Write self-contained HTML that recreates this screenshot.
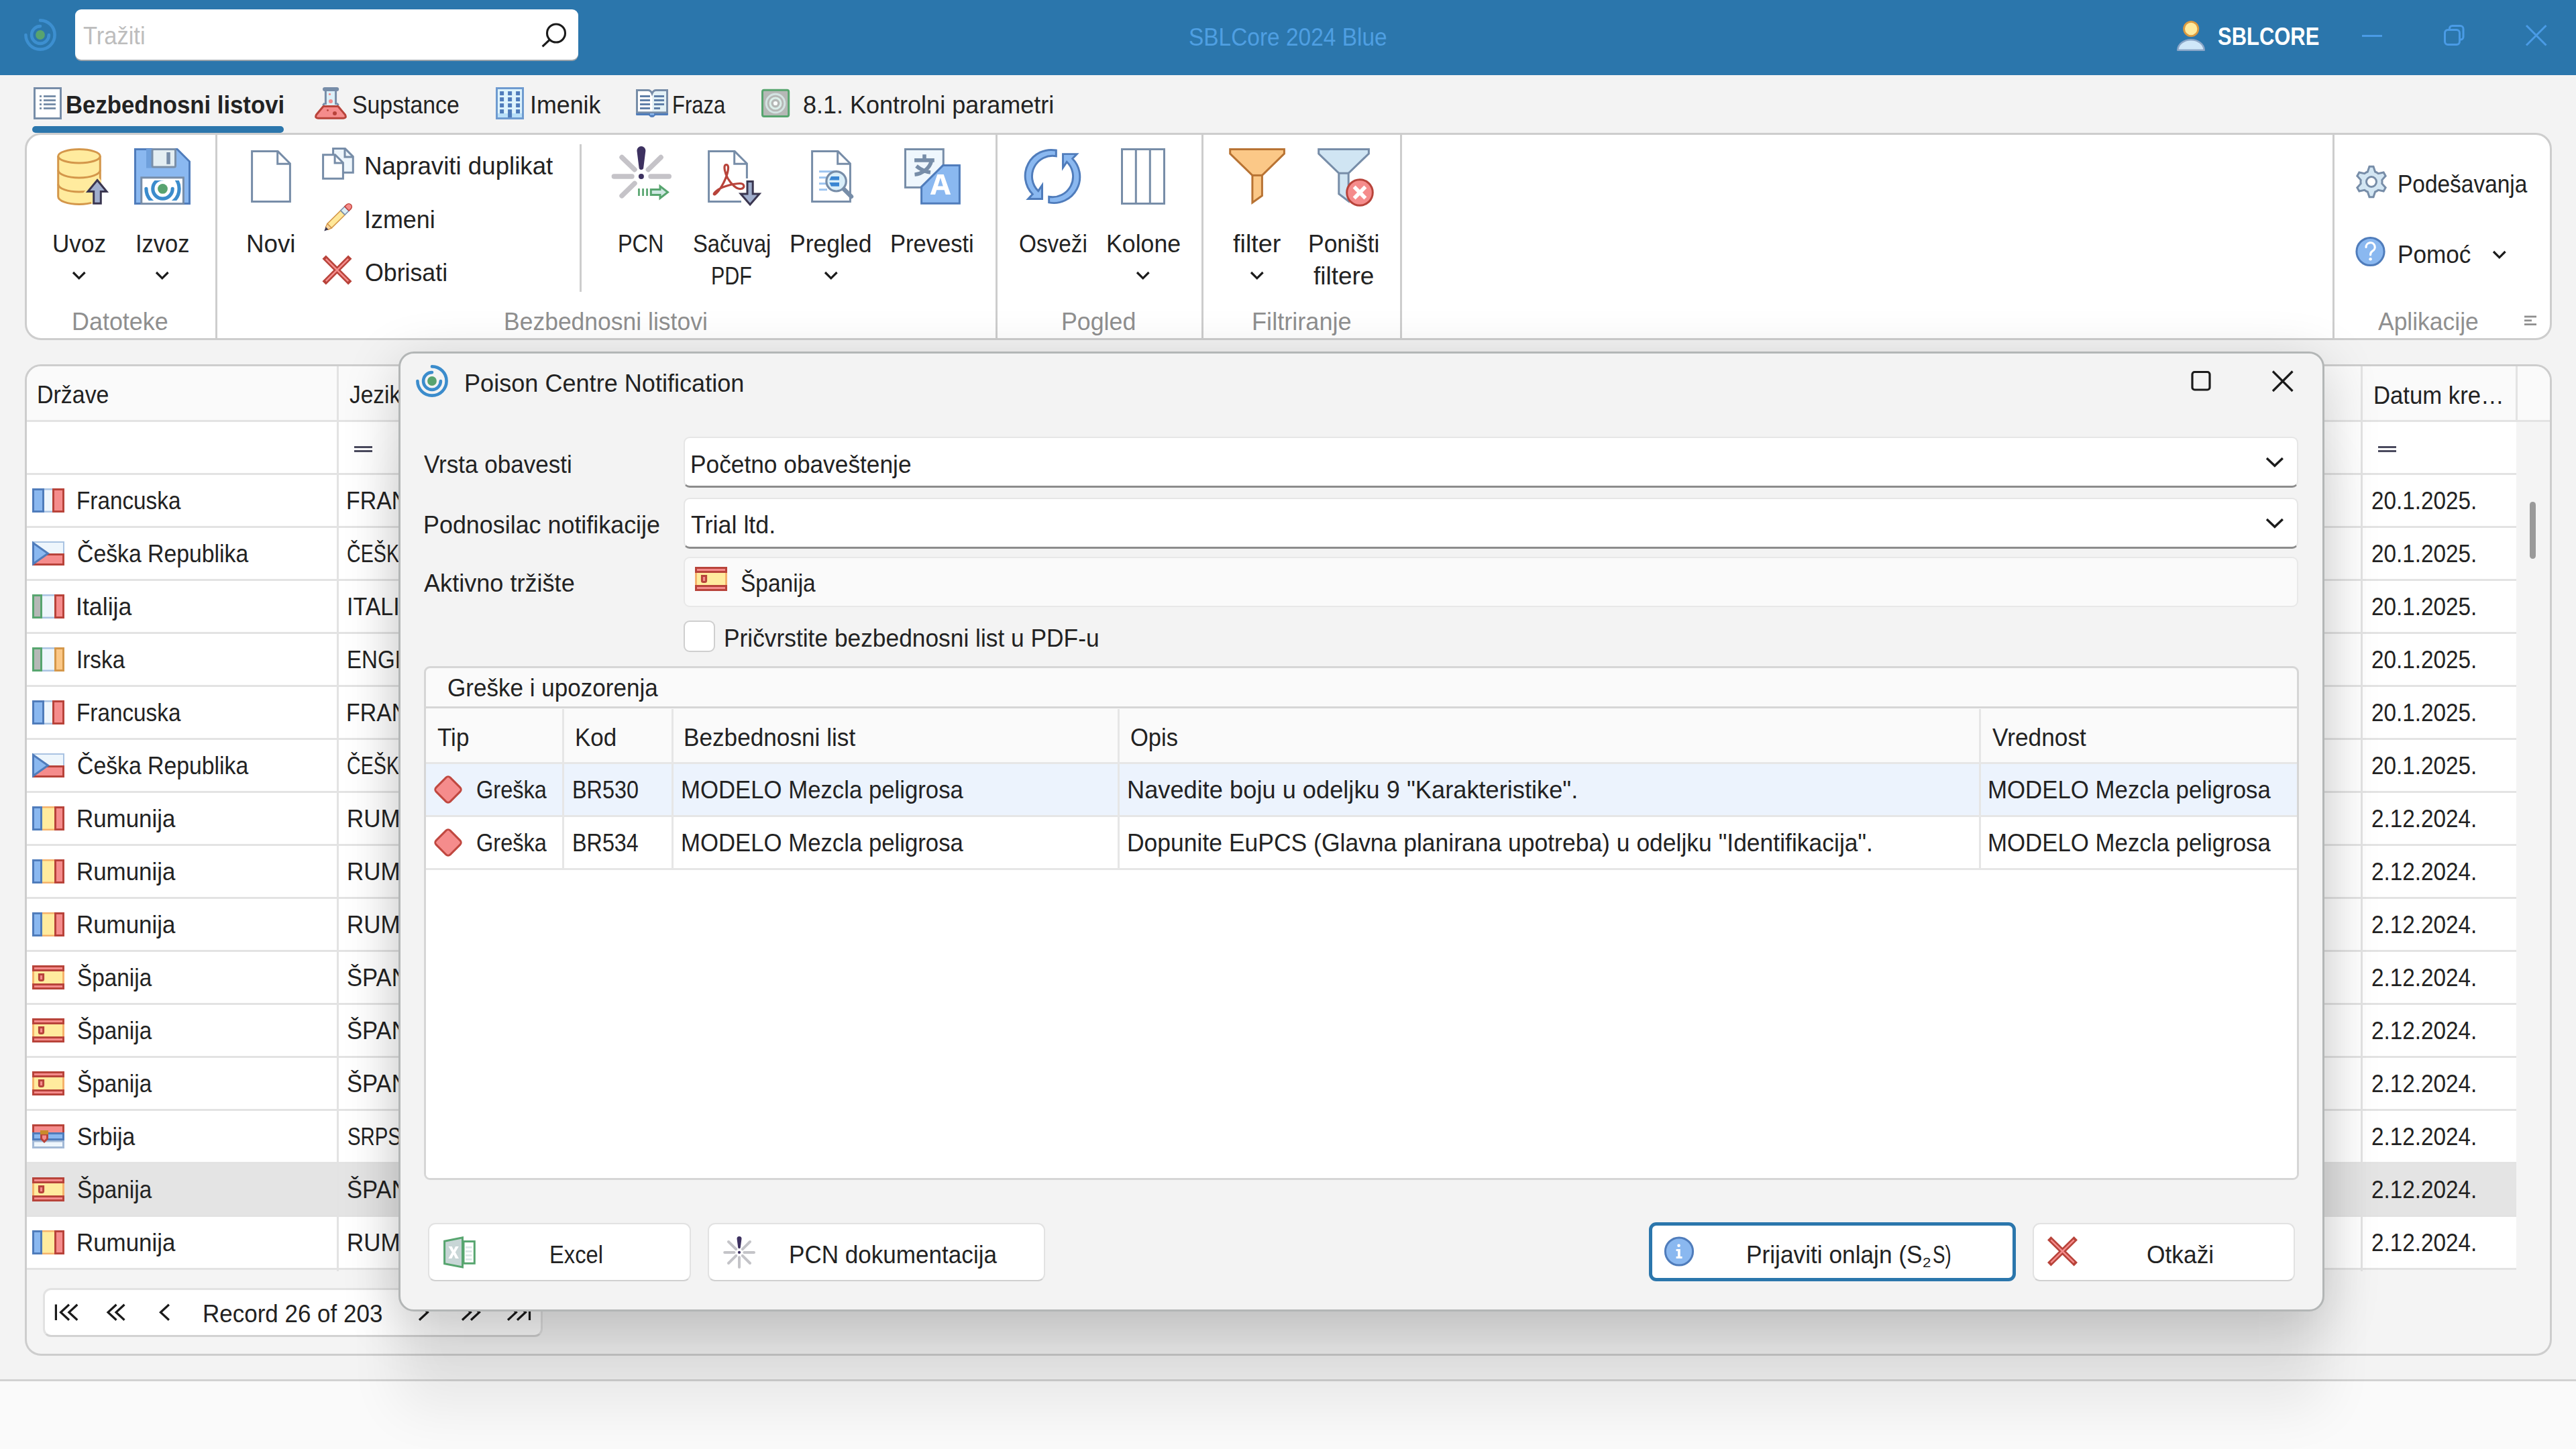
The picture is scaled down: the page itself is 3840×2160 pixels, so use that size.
<!DOCTYPE html>
<html lang="sr"><head><meta charset="utf-8"><title>SBLCore</title>
<style>
html,body{margin:0;padding:0;}
body{width:3840px;height:2160px;overflow:hidden;background:#f3f3f3;position:relative;font-family:"Liberation Sans",sans-serif;}
.t{position:absolute;white-space:nowrap;line-height:1;transform-origin:0 0;}
div{box-sizing:border-box;}
svg{overflow:visible;}
</style></head><body>
<div style="position:absolute;left:0px;top:0px;width:3840px;height:112px;background:#2b76ac;"></div>
<div style="position:absolute;left:112px;top:14px;width:750px;height:75px;background:#fff;border-radius:9px;box-shadow:0 2px 0 #9aa3aa;"></div>
<span class="t" style="left:124.31px;top:36.23px;font-size:36.2px;color:#bdbdbd;transform:scaleX(0.9530);">Tražiti</span>
<span class="t" style="left:1771.99px;top:38.23px;font-size:36.2px;color:#4f9fe2;transform:scaleX(0.9241);">SBLCore 2024 Blue</span>
<span class="t" style="left:3306.07px;top:37.23px;font-size:36.2px;font-weight:bold;color:#ffffff;transform:scaleX(0.8551);">SBLCORE</span>
<span class="t" style="left:97.74px;top:139.23px;font-size:36.2px;font-weight:bold;color:#222222;transform:scaleX(0.9597);">Bezbednosni listovi</span>
<div style="position:absolute;left:47.5px;top:188px;width:375px;height:9.5px;background:#2b76ac;border-radius:5px;"></div>
<span class="t" style="left:524.98px;top:139.23px;font-size:36.2px;color:#222222;transform:scaleX(0.9339);">Supstance</span>
<span class="t" style="left:789.78px;top:139.23px;font-size:36.2px;color:#222222;transform:scaleX(0.9889);">Imenik</span>
<span class="t" style="left:1001.52px;top:139.23px;font-size:36.2px;color:#222222;transform:scaleX(0.8561);">Fraza</span>
<span class="t" style="left:1197.38px;top:139.23px;font-size:36.2px;color:#222222;transform:scaleX(0.9948);">8.1. Kontrolni parametri</span>
<div style="position:absolute;left:37px;top:197.5px;width:3767px;height:309.5px;background:#fff;border:3px solid #cdcdcd;border-radius:24px;"></div>
<div style="position:absolute;left:321.0px;top:200px;width:3px;height:305px;background:#cdcdcd;"></div>
<div style="position:absolute;left:1483.5px;top:200px;width:3px;height:305px;background:#cdcdcd;"></div>
<div style="position:absolute;left:1790.5px;top:200px;width:3px;height:305px;background:#cdcdcd;"></div>
<div style="position:absolute;left:2086.5px;top:200px;width:3px;height:305px;background:#cdcdcd;"></div>
<div style="position:absolute;left:3476.5px;top:200px;width:3px;height:305px;background:#cdcdcd;"></div>
<div style="position:absolute;left:863.5px;top:214.5px;width:3px;height:220px;background:#cdcdcd;"></div>
<span class="t" style="left:77.87px;top:346.23px;font-size:36.2px;color:#222222;transform:scaleX(0.9704);">Uvoz</span>
<span class="t" style="left:202.40px;top:346.23px;font-size:36.2px;color:#222222;transform:scaleX(0.9527);">Izvoz</span>
<span class="t" style="left:367.06px;top:346.23px;font-size:36.2px;color:#222222;transform:scaleX(1.0156);">Novi</span>
<span class="t" style="left:543.07px;top:230.23px;font-size:36.2px;color:#222222;transform:scaleX(1.0132);">Napraviti duplikat</span>
<span class="t" style="left:542.77px;top:310.23px;font-size:36.2px;color:#222222;transform:scaleX(0.9921);">Izmeni</span>
<span class="t" style="left:543.89px;top:389.23px;font-size:36.2px;color:#222222;transform:scaleX(0.9874);">Obrisati</span>
<span class="t" style="left:921.41px;top:346.23px;font-size:36.2px;color:#222222;transform:scaleX(0.8953);">PCN</span>
<span class="t" style="left:1033.03px;top:346.23px;font-size:36.2px;color:#222222;transform:scaleX(0.9037);">Sačuvaj</span>
<span class="t" style="left:1059.57px;top:393.73px;font-size:36.2px;color:#222222;transform:scaleX(0.8405);">PDF</span>
<span class="t" style="left:1177.16px;top:346.23px;font-size:36.2px;color:#222222;transform:scaleX(0.9811);">Pregled</span>
<span class="t" style="left:1327.24px;top:346.23px;font-size:36.2px;color:#222222;transform:scaleX(0.9543);">Prevesti</span>
<span class="t" style="left:1518.50px;top:346.23px;font-size:36.2px;color:#222222;transform:scaleX(0.9211);">Osveži</span>
<span class="t" style="left:1648.65px;top:346.23px;font-size:36.2px;color:#222222;transform:scaleX(0.9858);">Kolone</span>
<span class="t" style="left:1838.43px;top:346.23px;font-size:36.2px;color:#222222;transform:scaleX(1.0454);">filter</span>
<span class="t" style="left:1949.66px;top:346.23px;font-size:36.2px;color:#222222;transform:scaleX(0.9792);">Poništi</span>
<span class="t" style="left:1958.45px;top:393.73px;font-size:36.2px;color:#222222;transform:scaleX(1.0216);">filtere</span>
<span class="t" style="left:3574.32px;top:257.23px;font-size:36.2px;color:#222222;transform:scaleX(0.9242);">Podešavanja</span>
<span class="t" style="left:3574.19px;top:362.23px;font-size:36.2px;color:#222222;transform:scaleX(0.9717);">Pomoć</span>
<span class="t" style="left:107.13px;top:461.73px;font-size:36.2px;color:#8f8f8f;transform:scaleX(0.9923);">Datoteke</span>
<span class="t" style="left:751.16px;top:461.73px;font-size:36.2px;color:#8f8f8f;transform:scaleX(0.9806);">Bezbednosni listovi</span>
<span class="t" style="left:1582.14px;top:461.73px;font-size:36.2px;color:#8f8f8f;transform:scaleX(0.9878);">Pogled</span>
<span class="t" style="left:1866.11px;top:461.73px;font-size:36.2px;color:#8f8f8f;transform:scaleX(0.9996);">Filtriranje</span>
<span class="t" style="left:3545.00px;top:461.73px;font-size:36.2px;color:#8f8f8f;transform:scaleX(0.9794);">Aplikacije</span>
<svg style="position:absolute;left:106.2px;top:403.20000000000005px;" width="23.6" height="14.8" viewBox="0 0 23.6 14.8"><polyline points="3,3 11.8,11.8 20.6,3" fill="none" stroke="#1b1b1b" stroke-width="3.2" stroke-linecap="butt" stroke-linejoin="miter"/></svg>
<svg style="position:absolute;left:230.2px;top:403.20000000000005px;" width="23.6" height="14.8" viewBox="0 0 23.6 14.8"><polyline points="3,3 11.8,11.8 20.6,3" fill="none" stroke="#1b1b1b" stroke-width="3.2" stroke-linecap="butt" stroke-linejoin="miter"/></svg>
<svg style="position:absolute;left:1227.2px;top:403.20000000000005px;" width="23.6" height="14.8" viewBox="0 0 23.6 14.8"><polyline points="3,3 11.8,11.8 20.6,3" fill="none" stroke="#1b1b1b" stroke-width="3.2" stroke-linecap="butt" stroke-linejoin="miter"/></svg>
<svg style="position:absolute;left:1692.2px;top:403.20000000000005px;" width="23.6" height="14.8" viewBox="0 0 23.6 14.8"><polyline points="3,3 11.8,11.8 20.6,3" fill="none" stroke="#1b1b1b" stroke-width="3.2" stroke-linecap="butt" stroke-linejoin="miter"/></svg>
<svg style="position:absolute;left:1862.2px;top:403.20000000000005px;" width="23.6" height="14.8" viewBox="0 0 23.6 14.8"><polyline points="3,3 11.8,11.8 20.6,3" fill="none" stroke="#1b1b1b" stroke-width="3.2" stroke-linecap="butt" stroke-linejoin="miter"/></svg>
<svg style="position:absolute;left:3713.5px;top:372.40000000000003px;" width="23.6" height="14.8" viewBox="0 0 23.6 14.8"><polyline points="3,3 11.8,11.8 20.6,3" fill="none" stroke="#1b1b1b" stroke-width="3.2" stroke-linecap="butt" stroke-linejoin="miter"/></svg>
<div style="position:absolute;left:37px;top:543px;width:3767px;height:1477.5px;background:#f4f4f4;border:3px solid #cdcdcd;border-radius:24px;overflow:hidden;">
<div style="position:absolute;left:0px;top:0px;width:3762px;height:80px;background:#fafafa;"></div>
<div style="position:absolute;left:0px;top:80px;width:3711px;height:1266px;background:#fff;"></div>
<div style="position:absolute;left:0px;top:1187px;width:3711px;height:80px;background:#e4e4e4;"></div>
<div style="position:absolute;left:0px;top:79.5px;width:3762px;height:3px;background:#e3e3e3;"></div>
<div style="position:absolute;left:0px;top:158.5px;width:3711px;height:3px;background:#e3e3e3;"></div>
<div style="position:absolute;left:0px;top:237.5px;width:3711px;height:3px;background:#e3e3e3;"></div>
<div style="position:absolute;left:0px;top:316.5px;width:3711px;height:3px;background:#e3e3e3;"></div>
<div style="position:absolute;left:0px;top:395.5px;width:3711px;height:3px;background:#e3e3e3;"></div>
<div style="position:absolute;left:0px;top:474.5px;width:3711px;height:3px;background:#e3e3e3;"></div>
<div style="position:absolute;left:0px;top:553.5px;width:3711px;height:3px;background:#e3e3e3;"></div>
<div style="position:absolute;left:0px;top:632.5px;width:3711px;height:3px;background:#e3e3e3;"></div>
<div style="position:absolute;left:0px;top:711.5px;width:3711px;height:3px;background:#e3e3e3;"></div>
<div style="position:absolute;left:0px;top:790.5px;width:3711px;height:3px;background:#e3e3e3;"></div>
<div style="position:absolute;left:0px;top:869.5px;width:3711px;height:3px;background:#e3e3e3;"></div>
<div style="position:absolute;left:0px;top:948.5px;width:3711px;height:3px;background:#e3e3e3;"></div>
<div style="position:absolute;left:0px;top:1027.5px;width:3711px;height:3px;background:#e3e3e3;"></div>
<div style="position:absolute;left:0px;top:1106.5px;width:3711px;height:3px;background:#e3e3e3;"></div>
<div style="position:absolute;left:0px;top:1185.5px;width:3711px;height:3px;background:#e3e3e3;"></div>
<div style="position:absolute;left:0px;top:1264.5px;width:3711px;height:3px;background:#e3e3e3;"></div>
<div style="position:absolute;left:0px;top:1343.5px;width:3711px;height:3px;background:#e3e3e3;"></div>
<div style="position:absolute;left:461.5px;top:0px;width:3px;height:1349px;background:#e3e3e3;"></div>
<div style="position:absolute;left:3478.5px;top:0px;width:3px;height:1349px;background:#e3e3e3;"></div>
<div style="position:absolute;left:3709.5px;top:0px;width:3px;height:81px;background:#e3e3e3;"></div>
</div>
<span class="t" style="left:55.28px;top:571.23px;font-size:36.2px;color:#222222;transform:scaleX(0.9378);">Države</span>
<span class="t" style="left:520.50px;top:571.23px;font-size:36.2px;color:#222222;transform:scaleX(0.9250);">Jezik</span>
<span class="t" style="left:3538.22px;top:571.73px;font-size:36.2px;color:#222222;transform:scaleX(0.9585);">Datum kre…</span>
<div style="position:absolute;left:528px;top:664.5px;width:27px;height:3px;background:#4a4a5e;"></div>
<div style="position:absolute;left:528px;top:670.5px;width:27px;height:3px;background:#4a4a5e;"></div>
<div style="position:absolute;left:3545px;top:664.5px;width:27px;height:3px;background:#4a4a5e;"></div>
<div style="position:absolute;left:3545px;top:670.5px;width:27px;height:3px;background:#4a4a5e;"></div>
<span class="t" style="left:113.84px;top:729.23px;font-size:36.2px;color:#222222;transform:scaleX(0.9200);">Francuska</span>
<span class="t" style="left:516.29px;top:729.23px;font-size:36.2px;color:#222222;transform:scaleX(0.9356);">FRAN</span>
<span class="t" style="left:3534.83px;top:729.23px;font-size:36.2px;color:#222222;transform:scaleX(0.9200);">20.1.2025.</span>
<span class="t" style="left:114.81px;top:808.23px;font-size:36.2px;color:#222222;transform:scaleX(0.9332);">Češka Republika</span>
<span class="t" style="left:517.07px;top:808.23px;font-size:36.2px;color:#222222;transform:scaleX(0.7913);">ČEŠK</span>
<span class="t" style="left:3534.83px;top:808.23px;font-size:36.2px;color:#222222;transform:scaleX(0.9200);">20.1.2025.</span>
<span class="t" style="left:113.28px;top:887.23px;font-size:36.2px;color:#222222;transform:scaleX(0.9868);">Italija</span>
<span class="t" style="left:516.94px;top:887.23px;font-size:36.2px;color:#222222;transform:scaleX(0.9381);">ITALI</span>
<span class="t" style="left:3534.83px;top:887.23px;font-size:36.2px;color:#222222;transform:scaleX(0.9200);">20.1.2025.</span>
<span class="t" style="left:113.50px;top:966.23px;font-size:36.2px;color:#222222;transform:scaleX(0.9213);">Irska</span>
<span class="t" style="left:517.05px;top:966.23px;font-size:36.2px;color:#222222;transform:scaleX(0.9155);">ENGL</span>
<span class="t" style="left:3534.83px;top:966.23px;font-size:36.2px;color:#222222;transform:scaleX(0.9200);">20.1.2025.</span>
<span class="t" style="left:113.84px;top:1045.23px;font-size:36.2px;color:#222222;transform:scaleX(0.9200);">Francuska</span>
<span class="t" style="left:516.29px;top:1045.23px;font-size:36.2px;color:#222222;transform:scaleX(0.9356);">FRAN</span>
<span class="t" style="left:3534.83px;top:1045.23px;font-size:36.2px;color:#222222;transform:scaleX(0.9200);">20.1.2025.</span>
<span class="t" style="left:114.81px;top:1124.23px;font-size:36.2px;color:#222222;transform:scaleX(0.9332);">Češka Republika</span>
<span class="t" style="left:517.07px;top:1124.23px;font-size:36.2px;color:#222222;transform:scaleX(0.7913);">ČEŠK</span>
<span class="t" style="left:3534.83px;top:1124.23px;font-size:36.2px;color:#222222;transform:scaleX(0.9200);">20.1.2025.</span>
<span class="t" style="left:113.71px;top:1203.23px;font-size:36.2px;color:#222222;transform:scaleX(0.9644);">Rumunija</span>
<span class="t" style="left:516.91px;top:1203.23px;font-size:36.2px;color:#222222;transform:scaleX(0.9639);">RUM</span>
<span class="t" style="left:3534.83px;top:1203.23px;font-size:36.2px;color:#222222;transform:scaleX(0.9200);">2.12.2024.</span>
<span class="t" style="left:113.71px;top:1282.23px;font-size:36.2px;color:#222222;transform:scaleX(0.9644);">Rumunija</span>
<span class="t" style="left:516.91px;top:1282.23px;font-size:36.2px;color:#222222;transform:scaleX(0.9639);">RUM</span>
<span class="t" style="left:3534.83px;top:1282.23px;font-size:36.2px;color:#222222;transform:scaleX(0.9200);">2.12.2024.</span>
<span class="t" style="left:113.71px;top:1361.23px;font-size:36.2px;color:#222222;transform:scaleX(0.9644);">Rumunija</span>
<span class="t" style="left:516.91px;top:1361.23px;font-size:36.2px;color:#222222;transform:scaleX(0.9639);">RUM</span>
<span class="t" style="left:3534.83px;top:1361.23px;font-size:36.2px;color:#222222;transform:scaleX(0.9200);">2.12.2024.</span>
<span class="t" style="left:115.00px;top:1440.23px;font-size:36.2px;color:#222222;transform:scaleX(0.9211);">Španija</span>
<span class="t" style="left:517.44px;top:1440.23px;font-size:36.2px;color:#222222;transform:scaleX(0.9559);">ŠPAN</span>
<span class="t" style="left:3534.83px;top:1440.23px;font-size:36.2px;color:#222222;transform:scaleX(0.9200);">2.12.2024.</span>
<span class="t" style="left:115.00px;top:1519.23px;font-size:36.2px;color:#222222;transform:scaleX(0.9211);">Španija</span>
<span class="t" style="left:517.44px;top:1519.23px;font-size:36.2px;color:#222222;transform:scaleX(0.9559);">ŠPAN</span>
<span class="t" style="left:3534.83px;top:1519.23px;font-size:36.2px;color:#222222;transform:scaleX(0.9200);">2.12.2024.</span>
<span class="t" style="left:115.00px;top:1598.23px;font-size:36.2px;color:#222222;transform:scaleX(0.9211);">Španija</span>
<span class="t" style="left:517.44px;top:1598.23px;font-size:36.2px;color:#222222;transform:scaleX(0.9559);">ŠPAN</span>
<span class="t" style="left:3534.83px;top:1598.23px;font-size:36.2px;color:#222222;transform:scaleX(0.9200);">2.12.2024.</span>
<span class="t" style="left:114.98px;top:1677.23px;font-size:36.2px;color:#222222;transform:scaleX(0.9322);">Srbija</span>
<span class="t" style="left:517.68px;top:1677.23px;font-size:36.2px;color:#222222;transform:scaleX(0.8109);">SRPS</span>
<span class="t" style="left:3534.83px;top:1677.23px;font-size:36.2px;color:#222222;transform:scaleX(0.9200);">2.12.2024.</span>
<span class="t" style="left:115.00px;top:1756.23px;font-size:36.2px;color:#222222;transform:scaleX(0.9211);">Španija</span>
<span class="t" style="left:517.44px;top:1756.23px;font-size:36.2px;color:#222222;transform:scaleX(0.9559);">ŠPAN</span>
<span class="t" style="left:3534.83px;top:1756.23px;font-size:36.2px;color:#222222;transform:scaleX(0.9200);">2.12.2024.</span>
<span class="t" style="left:113.71px;top:1835.23px;font-size:36.2px;color:#222222;transform:scaleX(0.9644);">Rumunija</span>
<span class="t" style="left:516.91px;top:1835.23px;font-size:36.2px;color:#222222;transform:scaleX(0.9639);">RUM</span>
<span class="t" style="left:3534.83px;top:1835.23px;font-size:36.2px;color:#222222;transform:scaleX(0.9200);">2.12.2024.</span>
<div style="position:absolute;left:3771px;top:748px;width:9px;height:85px;background:#9a9a9a;border-radius:5px;"></div>
<div style="position:absolute;left:63.5px;top:1919.5px;width:745.5px;height:73px;background:#fff;border:3px solid #e2e2e2;border-bottom-color:#d2d2d2;border-radius:12px;"></div>
<span class="t" style="left:302.20px;top:1941.23px;font-size:36.2px;color:#222222;transform:scaleX(0.9667);">Record 26 of 203</span>
<div style="position:absolute;left:0px;top:2059px;width:3840px;height:101px;background:#fafafa;"></div>
<div style="position:absolute;left:0px;top:2056px;width:3840px;height:3px;background:#d2d2d2;"></div>
<svg style="position:absolute;left:0;top:0" width="3840" height="2160" viewBox="0 0 3840 2160"><path d="M60,30.4 A21.6,21.6 0 1 1 38.4,52" fill="none" stroke="#3d8fd0" stroke-width="4.6" stroke-linecap="round"/><path d="M60,39.1 A12.9,12.9 0 1 0 72.9,52" fill="none" stroke="#3d8fd0" stroke-width="4.6" stroke-linecap="round"/><circle cx="60" cy="52" r="6.9" fill="#58a36f"/><circle cx="829" cy="49.5" r="13.5" fill="none" stroke="#1b1b1b" stroke-width="3.1"/><line x1="819.6" y1="59" x2="808.6" y2="69.4" stroke="#1b1b1b" stroke-width="3.1" stroke-linecap="butt"/><circle cx="3266.2" cy="43" r="10.6" fill="#ffeb9e" stroke="#db9a40" stroke-width="2.8"/><path d="M3246.3,74.7 A19.7,15.5 0 0 1 3285.7,74.7 Z" fill="#cfe7f9" stroke="#8aa6c8" stroke-width="2.6" stroke-linejoin="round"/><line x1="3521" y1="53.5" x2="3551" y2="53.5" stroke="#4a9be6" stroke-width="3"/><rect x="3644.5" y="44.5" width="22" height="22" rx="4.5" fill="none" stroke="#4a9be6" stroke-width="3"/><path d="M3651.5,44 V42.5 a4,4 0 0 1 4,-4 h12 a4.5,4.5 0 0 1 4.5,4.5 v12 a4,4 0 0 1 -4,4 h-1.5" fill="none" stroke="#4a9be6" stroke-width="3"/><path d="M3766,38 L3795.5,67.5 M3795.5,38 L3766,67.5" stroke="#4a9be6" stroke-width="3" fill="none"/><rect x="51.5" y="131.5" width="39" height="45" fill="#fff" stroke="#778da8" stroke-width="3"/><rect x="59" y="142.1" width="3" height="2.9" fill="#778da8"/><rect x="65" y="142.1" width="18" height="2.9" fill="#778da8"/><rect x="59" y="148.1" width="3" height="2.9" fill="#778da8"/><rect x="65" y="148.1" width="18" height="2.9" fill="#778da8"/><rect x="59" y="154.1" width="3" height="2.9" fill="#778da8"/><rect x="65" y="154.1" width="18" height="2.9" fill="#778da8"/><rect x="59" y="160.1" width="3" height="2.9" fill="#778da8"/><rect x="65" y="160.1" width="18" height="2.9" fill="#778da8"/><rect x="486.8" y="133" width="12.4" height="24.5" fill="#dcf0f8"/><path d="M485.4,133 V156 M500.6,133 V156" stroke="#778da8" stroke-width="3" fill="none"/><path d="M481.3,157 L484,154 M504.7,157 L502,154" stroke="#778da8" stroke-width="3" fill="none"/><line x1="484" y1="133" x2="502.2" y2="133" stroke="#778da8" stroke-width="6" stroke-linecap="round"/><circle cx="491.5" cy="140.4" r="1.6" fill="#f58c8c"/><circle cx="493" cy="150.9" r="3" fill="#f58c8c"/><path d="M482,158.5 H504 L514.5,171 Q517,176.2 512,176.2 H474 Q469,176.2 471.5,171 Z" fill="#f58c8c" stroke="#b8433a" stroke-width="3" stroke-linejoin="round"/><circle cx="488.5" cy="164.4" r="1.4" fill="#b8433a"/><circle cx="499" cy="169" r="3" fill="#b8433a"/><rect x="740.5" y="131.5" width="39" height="45" fill="#ddf3fd" stroke="#6f9bd0" stroke-width="3"/><rect x="742" y="169" width="36" height="6" fill="#b9e0f9"/><rect x="745.1" y="136.1" width="6" height="6" fill="#4f7cbb"/><rect x="745.1" y="145.1" width="6" height="6" fill="#4f7cbb"/><rect x="745.1" y="154.1" width="6" height="6" fill="#4f7cbb"/><rect x="745.1" y="163.1" width="6" height="6" fill="#4f7cbb"/><rect x="757.1" y="136.1" width="6" height="6" fill="#4f7cbb"/><rect x="757.1" y="145.1" width="6" height="6" fill="#4f7cbb"/><rect x="757.1" y="154.1" width="6" height="6" fill="#4f7cbb"/><rect x="757.1" y="163.1" width="6" height="12" fill="#4f7cbb"/><rect x="769.1" y="136.1" width="6" height="6" fill="#4f7cbb"/><rect x="769.1" y="145.1" width="6" height="6" fill="#4f7cbb"/><rect x="769.1" y="154.1" width="6" height="6" fill="#4f7cbb"/><rect x="769.1" y="163.1" width="6" height="6" fill="#4f7cbb"/><rect x="951" y="136" width="21.5" height="30" fill="#fff"/><rect x="972.5" y="136" width="20.5" height="30" fill="#e3f1f6"/><path d="M949.5,168 V134.5 H966 Q970,134.5 972,139.5 Q974,134.5 978,134.5 H994.5 V168" fill="none" stroke="#778da8" stroke-width="3"/><rect x="948" y="166.3" width="48" height="2.8" fill="#778da8"/><path d="M948,169 H996 V170.5 Q996,172 994.5,172 H977 L974,174.8 H970 L967,172 H949.5 Q948,172 948,170.5 Z" fill="#4f7cbb"/><rect x="969" y="169" width="6" height="2.5" fill="#8ab8f0"/><rect x="954" y="142" width="15" height="3" fill="#5f7fa8"/><rect x="975" y="142" width="15" height="3" fill="#5f7fa8"/><rect x="954" y="148" width="15" height="3" fill="#5f7fa8"/><rect x="975" y="148" width="15" height="3" fill="#5f7fa8"/><rect x="954" y="154" width="15" height="3" fill="#5f7fa8"/><rect x="975" y="154" width="15" height="3" fill="#5f7fa8"/><rect x="954" y="160" width="15" height="3" fill="#5f7fa8"/><rect x="975" y="160" width="9" height="3" fill="#5f7fa8"/><rect x="1136.5" y="134.3" width="39.2" height="39.2" rx="2.5" fill="#b5b8b6" stroke="#57a56f" stroke-width="3"/><circle cx="1156" cy="154" r="13.8" fill="none" stroke="#d3e3e2" stroke-width="3"/><circle cx="1156" cy="154" r="8" fill="none" stroke="#dbeee9" stroke-width="3"/><circle cx="1156" cy="154" r="3.1" fill="#fbfffe"/><path d="M86.7,232.8 V293 A31.3,11.6 0 0 0 149.3,293 V232.8" fill="#ffeb9e" stroke="#d4974a" stroke-width="3"/><ellipse cx="118" cy="232.8" rx="31.3" ry="10.2" fill="#ffeb9e" stroke="#d4974a" stroke-width="3"/><path d="M86.7,253.5 A31.3,11.6 0 0 0 149.3,253.5" fill="none" stroke="#d4974a" stroke-width="3"/><path d="M86.7,274.5 A31.3,11.6 0 0 0 149.3,274.5" fill="none" stroke="#d4974a" stroke-width="3"/><clipPath id="cyl"><path d="M85.2,232.8 V293 A32.8,13.1 0 0 0 150.8,293 V232.8 Z"/></clipPath><path d="M145,262 L167,289 H154 V308 H136 V289 H123 Z" fill="#ffeb9e" clip-path="url(#cyl)"/><path d="M145,268.5 L159,285.5 H150.3 V303.2 H139.7 V285.5 H131 Z" fill="#a0aecd" stroke="#3a3650" stroke-width="3" stroke-linejoin="miter"/><path d="M201.5,222.5 H264.2 L282.5,240.8 V303.5 H201.5 Z" fill="#8ab8f0" stroke="#4f7cbb" stroke-width="3"/><rect x="218" y="222" width="9.5" height="28.5" fill="#6fa0dc"/><rect x="227" y="222.5" width="34.5" height="26.5" rx="2" fill="#e4eef2" stroke="#7a8fa8" stroke-width="3"/><rect x="248.3" y="227" width="5.5" height="17.8" fill="#778da8"/><rect x="210.8" y="264.8" width="62.6" height="38.9" fill="#fff" stroke="#778da8" stroke-width="3"/><clipPath id="lbl"><rect x="212.3" y="269" width="59.6" height="30"/></clipPath><g clip-path="url(#lbl)"><path d="M242.5,256.79999999999995 A24.6,24.6 0 1 1 217.9,281.4" fill="none" stroke="#3b8ccc" stroke-width="5.2" stroke-linecap="round"/><path d="M242.5,266.7 A14.7,14.7 0 1 0 257.2,281.4" fill="none" stroke="#3b8ccc" stroke-width="5.2" stroke-linecap="round"/><circle cx="242.5" cy="281.4" r="7.4" fill="#58a36f"/></g><path d="M375.6,225.6 H414.2 L432.4,243.79999999999998 V300.4 H375.6 Z" fill="#fff" stroke="#778da8" stroke-width="3" stroke-linejoin="miter"/><path d="M413.7,225.6 V244.29999999999998 H432.4" fill="none" stroke="#778da8" stroke-width="3"/><path d="M496.6,221.6 H514.5 L526.3,233.4 V257.2 H496.6 Z" fill="#eef6fc" stroke="#778da8" stroke-width="3" stroke-linejoin="miter"/><path d="M514.0,221.6 V233.9 H526.3" fill="none" stroke="#778da8" stroke-width="3"/><path d="M481.6,230.7 H499.59999999999997 L511.4,242.5 V266.3 H481.6 Z" fill="#fff" stroke="#778da8" stroke-width="3" stroke-linejoin="miter"/><path d="M499.09999999999997,230.7 V243.0 H511.4" fill="none" stroke="#778da8" stroke-width="3"/><g transform="translate(483.3,344.5) rotate(-44.8)"><path d="M11,-4.5 H39 V4.5 H11 Z" fill="#ffe89a" stroke="#d4974a" stroke-width="1.6"/><path d="M5.5,-2.6 L11,-4.5 V4.5 L5.5,2.6 Z" fill="#f8d59e" stroke="#d4974a" stroke-width="1.4"/><path d="M0,0 L6,-2.8 V2.8 Z" fill="#3a3650"/><rect x="39" y="-4.5" width="8.5" height="9" fill="#dcedf5" stroke="#7a90ab" stroke-width="1.6"/><path d="M47.5,-4.5 H51.5 A4.5,4.5 0 0 1 51.5,4.5 H47.5 Z" fill="#f58c8c" stroke="#c0453d" stroke-width="1.6"/></g><path d="M483.18698,383.18698 L521.81302,421.81302 M521.81302,383.18698 L483.18698,421.81302" stroke="#b8433a" stroke-width="7.6" fill="none"/><path d="M485.78698,385.78698 L519.21302,419.21302 M519.21302,385.78698 L485.78698,419.21302" stroke="#f58c8c" stroke-width="2.4" fill="none"/><line x1="915.3" y1="263" x2="942" y2="263" stroke="#c5c3c8" stroke-width="7.4" stroke-linecap="round"/><line x1="970" y1="263" x2="997.3" y2="263" stroke="#c5c3c8" stroke-width="7.4" stroke-linecap="round"/><line x1="927" y1="234.5" x2="946" y2="252.8" stroke="#c5c3c8" stroke-width="7.4" stroke-linecap="round"/><line x1="985.2" y1="234.5" x2="966.3" y2="252.8" stroke="#c5c3c8" stroke-width="7.4" stroke-linecap="round"/><line x1="927" y1="291.8" x2="946" y2="273.3" stroke="#c5c3c8" stroke-width="7.4" stroke-linecap="round"/><circle cx="955.9" cy="262.9" r="4" fill="#3d3160"/><path d="M949.4,224.5 A6.5,6.5 0 0 1 962.4,224.5 L959.3,249.5 A3.4,3.4 0 0 1 952.5,249.5 Z" fill="#3d3160"/><rect x="951.1" y="281" width="2.7" height="11" fill="#57a56f"/><rect x="957.2" y="281" width="2.7" height="11" fill="#57a56f"/><rect x="963.2" y="281" width="2.7" height="11" fill="#57a56f"/><path d="M970.3,282.5 H984 V277.5 L995.5,286.5 L984,295.5 V290.5 H970.3 Z" fill="#cfe8e2" stroke="#57a56f" stroke-width="3" stroke-linejoin="miter"/><path d="M1113.4,266 V243.79999999999998 L1095.2,225.6 H1056.6 V300.4 H1105" fill="#fff" stroke="#778da8" stroke-width="3"/><path d="M1094.7,225.6 V244.29999999999998 H1113.4" fill="none" stroke="#778da8" stroke-width="3"/><path d="M1066,289.5 C1072,286 1081,270 1084,259 C1086.5,250 1086,245.5 1082.5,245.5 C1078,245.5 1080,257 1085,266 C1090,274.5 1098,282.5 1104.5,281.5 C1111,280.5 1110,273.5 1103,273.5 C1094,273.5 1078,277.5 1070,283 C1063.5,287.5 1063,291 1066,289.5 Z" fill="none" stroke="#b8433a" stroke-width="3.2" stroke-linejoin="round"/><path d="M1114,270.5 H1122.2 V289 H1132 L1118.1,305 L1104.2,289 H1114 Z" fill="#a0aecd" stroke="#3a3650" stroke-width="3" stroke-linejoin="miter"/><path d="M1210.6,225.6 H1249.2 L1267.4,243.79999999999998 V300.4 H1210.6 Z" fill="#fff" stroke="#778da8" stroke-width="3" stroke-linejoin="miter"/><path d="M1248.7,225.6 V244.29999999999998 H1267.4" fill="none" stroke="#778da8" stroke-width="3"/><rect x="1221" y="254.2" width="24.700000000000045" height="3" fill="#9cc4f0"/><rect x="1221" y="263.2" width="11" height="3" fill="#9cc4f0"/><rect x="1221" y="272.2" width="10" height="3" fill="#9cc4f0"/><rect x="1221" y="281.2" width="12" height="3" fill="#9cc4f0"/><line x1="1258" y1="282" x2="1269" y2="293" stroke="#778da8" stroke-width="6.4" stroke-linecap="round"/><circle cx="1246.6" cy="270.3" r="14.7" fill="#d9eef9" stroke="#778da8" stroke-width="3.2"/><path d="M1239,263 H1251 V268.6 H1236.3 Z M1236.3,272 H1251 V277.8 H1239 Z" fill="#3a86d2"/><rect x="1349.5" y="222.5" width="56.8" height="56.9" fill="#eff7fd" stroke="#778da8" stroke-width="3"/><path d="M1378,230.3 V237 M1363.1,238.9 H1392.8 M1388.5,240 C1386,250 1376,259 1363.5,260.3 M1366,247.5 C1372,252.5 1380,256 1387,257" fill="none" stroke="#778da8" stroke-width="5.6"/><path d="M1405.6,246.6 H1430.4 V303.3 H1373.6 V278.4 Z" fill="#8ab8f0" stroke="#4f7cbb" stroke-width="3" stroke-linejoin="miter"/><path d="M1397.3,260 H1406.7 L1417.2,290 H1409.7 L1407.6,283.3 H1396.2 L1394.1,290 H1386.8 Z M1398,277.5 H1405.8 L1401.9,265 Z" fill="#fff" fill-rule="evenodd"/><path d="M1574.5,222.8 A40.2,40.2 0 0 0 1538.3,290.4 L1531.5,297.5 L1553,297.5 L1553,276.5 L1547,285.4 A31.5,31.5 0 0 1 1574.5,231.8 Z" fill="#8ab8f0" stroke="#4f7cbb" stroke-width="3.1" stroke-linejoin="miter" transform="translate(1569 263) scale(0.968) translate(-1569 -263)"/><path d="M1574.5,222.8 A40.2,40.2 0 0 0 1538.3,290.4 L1531.5,297.5 L1553,297.5 L1553,276.5 L1547,285.4 A31.5,31.5 0 0 1 1574.5,231.8 Z" fill="#8ab8f0" stroke="#4f7cbb" stroke-width="3" stroke-linejoin="miter" transform="translate(1569 263) scale(0.968) rotate(180) translate(-1569 -263)"/><rect x="1672.5" y="222.5" width="63" height="81" fill="#fff" stroke="#778da8" stroke-width="3"/><path d="M1693.3,222 V304 M1714.3,222 V304" stroke="#778da8" stroke-width="3"/><path d="M1833.7,222.5 H1914.4 V229 L1881.4,261.4 V291.8 L1866.9,302 V261.4 L1833.7,229 Z" fill="#fbc887" stroke="#b87333" stroke-width="3" stroke-linejoin="miter"/><line x1="1866.9" y1="261.4" x2="1881.4" y2="261.4" stroke="#b87333" stroke-width="3"/><path d="M1965.7,222.5 H2040.4 V229 L2010.2,258.2 V300 L1995.8,289 V258.2 L1965.7,229 Z" fill="#d0e5f3" stroke="#778da8" stroke-width="3" stroke-linejoin="miter"/><line x1="1995.8" y1="258.2" x2="2010.2" y2="258.2" stroke="#778da8" stroke-width="3"/><circle cx="2027" cy="287" r="19.3" fill="#f58c8c" stroke="#b8433a" stroke-width="3"/><path d="M2018.6,278.6 L2035.4,295.4 M2035.4,278.6 L2018.6,295.4" stroke="#fff" stroke-width="5.6"/><rect x="3763" y="470.6" width="18" height="2.8" fill="#8f8f8f"/><rect x="3763" y="476.40000000000003" width="11" height="2.8" fill="#8f8f8f"/><rect x="3763" y="482.20000000000005" width="18" height="2.8" fill="#8f8f8f"/><path d="M3529.40,256.01 L3532.00,248.30 L3538.00,248.30 L3540.60,256.01 A16,16 0 0 1 3545.18,258.66 L3553.16,257.05 L3556.16,262.25 L3550.78,268.36 A16,16 0 0 1 3550.78,273.64 L3556.16,279.75 L3553.16,284.95 L3545.18,283.34 A16,16 0 0 1 3540.60,285.99 L3538.00,293.70 L3532.00,293.70 L3529.40,285.99 A16,16 0 0 1 3524.82,283.34 L3516.84,284.95 L3513.84,279.75 L3519.22,273.64 A16,16 0 0 1 3519.22,268.36 L3513.84,262.25 L3516.84,257.05 L3524.82,258.66 A16,16 0 0 1 3529.40,256.01 Z" fill="#d3e6f3" stroke="#778da8" stroke-width="3" stroke-linejoin="miter"/><circle cx="3535" cy="271" r="7.5" fill="#fff" stroke="#778da8" stroke-width="3"/><circle cx="3533.5" cy="375" r="20.6" fill="#8ab8f0" stroke="#4f7cbb" stroke-width="3"/><path d="M3527,368.5 A6.6,6.6 0 1 1 3536.5,374.3 Q3533.6,376 3533.6,380" fill="none" stroke="#fff" stroke-width="3.2" stroke-linecap="round"/><circle cx="3533.6" cy="386.3" r="2.3" fill="#fff"/><rect x="66" y="728" width="12" height="36" fill="#a9c3e2"/><rect x="66" y="730.5" width="12" height="31" fill="#eef6fc"/><rect x="49.5" y="729.5" width="15" height="33" fill="#8ab8f0" stroke="#4f7cbb" stroke-width="3"/><rect x="79.5" y="729.5" width="15" height="33" fill="#f58c8c" stroke="#b8433a" stroke-width="3"/><rect x="49" y="808" width="46" height="34" fill="#eef6fc" stroke="#a9c3e2" stroke-width="2"/><rect x="49.5" y="826.5" width="45" height="15" fill="#f58c8c" stroke="#b8433a" stroke-width="3"/><path d="M49.5,809.5 L71.5,825 L49.5,840.5 Z" fill="#8ab8f0" stroke="#4f7cbb" stroke-width="3" stroke-linejoin="miter"/><rect x="63" y="886" width="18" height="36" fill="#a9c3e2"/><rect x="63" y="888.5" width="18" height="31" fill="#eef6fc"/><rect x="49.5" y="887.5" width="12" height="33" fill="#b5b8b6" stroke="#57a56f" stroke-width="3"/><rect x="82.5" y="887.5" width="12" height="33" fill="#f58c8c" stroke="#b8433a" stroke-width="3"/><rect x="63" y="965" width="18" height="36" fill="#a9c3e2"/><rect x="63" y="967.5" width="18" height="31" fill="#eef6fc"/><rect x="49.5" y="966.5" width="12" height="33" fill="#b5b8b6" stroke="#57a56f" stroke-width="3"/><rect x="82.5" y="966.5" width="12" height="33" fill="#fbc887" stroke="#d4974a" stroke-width="3"/><rect x="66" y="1044" width="12" height="36" fill="#a9c3e2"/><rect x="66" y="1046.5" width="12" height="31" fill="#eef6fc"/><rect x="49.5" y="1045.5" width="15" height="33" fill="#8ab8f0" stroke="#4f7cbb" stroke-width="3"/><rect x="79.5" y="1045.5" width="15" height="33" fill="#f58c8c" stroke="#b8433a" stroke-width="3"/><rect x="49" y="1124" width="46" height="34" fill="#eef6fc" stroke="#a9c3e2" stroke-width="2"/><rect x="49.5" y="1142.5" width="45" height="15" fill="#f58c8c" stroke="#b8433a" stroke-width="3"/><path d="M49.5,1125.5 L71.5,1141 L49.5,1156.5 Z" fill="#8ab8f0" stroke="#4f7cbb" stroke-width="3" stroke-linejoin="miter"/><rect x="63" y="1202" width="18" height="36" fill="#f5b26b"/><rect x="63" y="1204.5" width="18" height="31" fill="#ffeb9e"/><rect x="49.5" y="1203.5" width="12" height="33" fill="#8ab8f0" stroke="#4f7cbb" stroke-width="3"/><rect x="82.5" y="1203.5" width="12" height="33" fill="#f58c8c" stroke="#b8433a" stroke-width="3"/><rect x="63" y="1281" width="18" height="36" fill="#f5b26b"/><rect x="63" y="1283.5" width="18" height="31" fill="#ffeb9e"/><rect x="49.5" y="1282.5" width="12" height="33" fill="#8ab8f0" stroke="#4f7cbb" stroke-width="3"/><rect x="82.5" y="1282.5" width="12" height="33" fill="#f58c8c" stroke="#b8433a" stroke-width="3"/><rect x="63" y="1360" width="18" height="36" fill="#f5b26b"/><rect x="63" y="1362.5" width="18" height="31" fill="#ffeb9e"/><rect x="49.5" y="1361.5" width="12" height="33" fill="#8ab8f0" stroke="#4f7cbb" stroke-width="3"/><rect x="82.5" y="1361.5" width="12" height="33" fill="#f58c8c" stroke="#b8433a" stroke-width="3"/><rect x="48" y="1447" width="48" height="20" fill="#f5b26b"/><rect x="51" y="1447" width="42" height="20" fill="#ffeb9e"/><rect x="49.5" y="1440.5" width="45" height="6" fill="#f58c8c" stroke="#b8433a" stroke-width="3"/><rect x="49.5" y="1467.5" width="45" height="6" fill="#f58c8c" stroke="#b8433a" stroke-width="3"/><path d="M58.4,1452.5 H64.6 V1459.5 Q64.6,1461.6 62.5,1461.6 H60.5 Q58.4,1461.6 58.4,1459.5 Z" fill="#f58c8c" stroke="#b8433a" stroke-width="3"/><rect x="48" y="1526" width="48" height="20" fill="#f5b26b"/><rect x="51" y="1526" width="42" height="20" fill="#ffeb9e"/><rect x="49.5" y="1519.5" width="45" height="6" fill="#f58c8c" stroke="#b8433a" stroke-width="3"/><rect x="49.5" y="1546.5" width="45" height="6" fill="#f58c8c" stroke="#b8433a" stroke-width="3"/><path d="M58.4,1531.5 H64.6 V1538.5 Q64.6,1540.6 62.5,1540.6 H60.5 Q58.4,1540.6 58.4,1538.5 Z" fill="#f58c8c" stroke="#b8433a" stroke-width="3"/><rect x="48" y="1605" width="48" height="20" fill="#f5b26b"/><rect x="51" y="1605" width="42" height="20" fill="#ffeb9e"/><rect x="49.5" y="1598.5" width="45" height="6" fill="#f58c8c" stroke="#b8433a" stroke-width="3"/><rect x="49.5" y="1625.5" width="45" height="6" fill="#f58c8c" stroke="#b8433a" stroke-width="3"/><path d="M58.4,1610.5 H64.6 V1617.5 Q64.6,1619.6 62.5,1619.6 H60.5 Q58.4,1619.6 58.4,1617.5 Z" fill="#f58c8c" stroke="#b8433a" stroke-width="3"/><rect x="49.5" y="1701" width="45" height="9.5" fill="#eef6fc" stroke="#a3b9d6" stroke-width="3"/><rect x="49.5" y="1677.5" width="45" height="12" fill="#f58c8c" stroke="#b8433a" stroke-width="3"/><rect x="49.5" y="1689.5" width="45" height="9" fill="#8ab8f0" stroke="#4f7cbb" stroke-width="3"/><path d="M61.5,1691 V1697.5 L66,1702 L70.5,1697.5 V1691 Z" fill="#f58c8c" stroke="#b8433a" stroke-width="3"/><rect x="60" y="1685" width="12" height="6" fill="#c98a2b"/><rect x="48" y="1763" width="48" height="20" fill="#f5b26b"/><rect x="51" y="1763" width="42" height="20" fill="#ffeb9e"/><rect x="49.5" y="1756.5" width="45" height="6" fill="#f58c8c" stroke="#b8433a" stroke-width="3"/><rect x="49.5" y="1783.5" width="45" height="6" fill="#f58c8c" stroke="#b8433a" stroke-width="3"/><path d="M58.4,1768.5 H64.6 V1775.5 Q64.6,1777.6 62.5,1777.6 H60.5 Q58.4,1777.6 58.4,1775.5 Z" fill="#f58c8c" stroke="#b8433a" stroke-width="3"/><rect x="63" y="1834" width="18" height="36" fill="#f5b26b"/><rect x="63" y="1836.5" width="18" height="31" fill="#ffeb9e"/><rect x="49.5" y="1835.5" width="12" height="33" fill="#8ab8f0" stroke="#4f7cbb" stroke-width="3"/><rect x="82.5" y="1835.5" width="12" height="33" fill="#f58c8c" stroke="#b8433a" stroke-width="3"/><path d="M83.4,1944.5 V1968 M103.0,1944.8 L90.5,1956.3 L103.0,1967.8 M115.3,1944.8 L102.8,1956.3 L115.3,1967.8 M173.5,1944.8 L161,1956.3 L173.5,1967.8 M185.5,1944.8 L173,1956.3 L185.5,1967.8 M251.9,1944.8 L239.4,1956.3 L251.9,1967.8 M625,1944.8 L637.5,1956.3 L625,1967.8 M689,1944.8 L701.5,1956.3 L689,1967.8 M702,1944.8 L714.5,1956.3 L702,1967.8 M757,1944.8 L769.5,1956.3 L757,1967.8 M771,1944.8 L783.5,1956.3 L771,1967.8 M789.5,1944.5 V1968" fill="none" stroke="#1b1b1b" stroke-width="3.2"/></svg>
<div style="position:absolute;left:594px;top:524px;width:2871px;height:1431px;background:#f3f3f3;border:3px solid #b3b6b6;border-radius:23px;box-shadow:0 20px 83px rgba(0,0,0,0.185),0 145px 81px rgba(0,0,0,0.072);"></div>
<span class="t" style="left:692.11px;top:553.73px;font-size:36.2px;color:#222222;transform:scaleX(0.9975);">Poison Centre Notification</span>
<span class="t" style="left:631.82px;top:675.23px;font-size:36.2px;color:#222222;transform:scaleX(0.9683);">Vrsta obavesti</span>
<span class="t" style="left:630.63px;top:765.23px;font-size:36.2px;color:#222222;transform:scaleX(0.9915);">Podnosilac notifikacije</span>
<span class="t" style="left:632.00px;top:852.23px;font-size:36.2px;color:#222222;transform:scaleX(0.9977);">Aktivno tržište</span>
<div style="position:absolute;left:1019px;top:651px;width:2407px;height:76px;background:#fff;border:2.5px solid #e6e6e6;border-bottom:3px solid #8c8c8c;border-radius:9px;"></div>
<div style="position:absolute;left:1019px;top:741.5px;width:2407px;height:76px;background:#fff;border:2.5px solid #e6e6e6;border-bottom:3px solid #8c8c8c;border-radius:9px;"></div>
<div style="position:absolute;left:1019px;top:829.5px;width:2407px;height:75px;background:#fafafa;border:2.5px solid #e8e8e8;border-radius:9px;"></div>
<span class="t" style="left:1029.18px;top:675.23px;font-size:36.2px;color:#222222;transform:scaleX(0.9749);">Početno obaveštenje</span>
<span class="t" style="left:1030.28px;top:765.23px;font-size:36.2px;color:#222222;transform:scaleX(0.9914);">Trial ltd.</span>
<span class="t" style="left:1104.49px;top:851.73px;font-size:36.2px;color:#222222;transform:scaleX(0.9253);">Španija</span>
<svg style="position:absolute;left:3376.1px;top:680.25px;" width="29.8" height="17.3" viewBox="0 0 29.8 17.3"><polyline points="3,3 14.9,14.3 26.8,3" fill="none" stroke="#1b1b1b" stroke-width="3.4" stroke-linecap="butt" stroke-linejoin="miter"/></svg>
<svg style="position:absolute;left:3376.1px;top:770.5500000000001px;" width="29.8" height="17.3" viewBox="0 0 29.8 17.3"><polyline points="3,3 14.9,14.3 26.8,3" fill="none" stroke="#1b1b1b" stroke-width="3.4" stroke-linecap="butt" stroke-linejoin="miter"/></svg>
<div style="position:absolute;left:1019px;top:925px;width:46.5px;height:46.5px;background:#fff;border:2.5px solid #cfcfcf;border-radius:9px;"></div>
<span class="t" style="left:1079.17px;top:933.73px;font-size:36.2px;color:#222222;transform:scaleX(0.9763);">Pričvrstite bezbednosni list u PDF-u</span>
<div style="position:absolute;left:632px;top:993px;width:2795px;height:766px;background:#fafafa;border:3px solid #d6d6d6;border-radius:9px;"></div>
<span class="t" style="left:667.25px;top:1008.23px;font-size:36.2px;color:#222222;transform:scaleX(0.9690);">Greške i upozorenja</span>
<div style="position:absolute;left:635px;top:1052.5px;width:2789px;height:3px;background:#d6d6d6;"></div>
<div style="position:absolute;left:635px;top:1139px;width:2789px;height:617px;background:#fff;border-radius:0 0 6px 6px;"></div>
<div style="position:absolute;left:635px;top:1139px;width:2789px;height:77px;background:#ecf3fd;"></div>
<div style="position:absolute;left:635px;top:1136.0px;width:2789px;height:3px;background:#e6e6e6;"></div>
<div style="position:absolute;left:635px;top:1215.0px;width:2789px;height:3px;background:#e6e6e6;"></div>
<div style="position:absolute;left:635px;top:1294.0px;width:2789px;height:3px;background:#e6e6e6;"></div>
<div style="position:absolute;left:838.0px;top:1057px;width:3px;height:240px;background:#e6e6e6;"></div>
<div style="position:absolute;left:1000.5px;top:1057px;width:3px;height:240px;background:#e6e6e6;"></div>
<div style="position:absolute;left:1665.5px;top:1057px;width:3px;height:240px;background:#e6e6e6;"></div>
<div style="position:absolute;left:2949.5px;top:1057px;width:3px;height:240px;background:#e6e6e6;"></div>
<span class="t" style="left:652.30px;top:1082.23px;font-size:36.2px;color:#222222;transform:scaleX(0.9679);">Tip</span>
<span class="t" style="left:857.20px;top:1082.23px;font-size:36.2px;color:#222222;transform:scaleX(0.9664);">Kod</span>
<span class="t" style="left:1019.18px;top:1082.23px;font-size:36.2px;color:#222222;transform:scaleX(0.9721);">Bezbednosni list</span>
<span class="t" style="left:1685.45px;top:1082.23px;font-size:36.2px;color:#222222;transform:scaleX(0.9539);">Opis</span>
<span class="t" style="left:2969.52px;top:1082.23px;font-size:36.2px;color:#222222;transform:scaleX(0.9744);">Vrednost</span>
<span class="t" style="left:710.37px;top:1160.23px;font-size:36.2px;color:#222222;transform:scaleX(0.8993);">Greška</span>
<span class="t" style="left:853.41px;top:1160.23px;font-size:36.2px;color:#222222;transform:scaleX(0.8945);">BR530</span>
<span class="t" style="left:1015.22px;top:1160.23px;font-size:36.2px;color:#222222;transform:scaleX(0.9599);">MODELO Mezcla peligrosa</span>
<span class="t" style="left:1680.10px;top:1160.23px;font-size:36.2px;color:#222222;transform:scaleX(1.0013);">Navedite boju u odeljku 9 &quot;Karakteristike&quot;.</span>
<span class="t" style="left:2963.21px;top:1160.23px;font-size:36.2px;color:#222222;transform:scaleX(0.9622);">MODELO Mezcla peligrosa</span>
<span class="t" style="left:710.37px;top:1239.23px;font-size:36.2px;color:#222222;transform:scaleX(0.8993);">Greška</span>
<span class="t" style="left:853.41px;top:1239.23px;font-size:36.2px;color:#222222;transform:scaleX(0.8930);">BR534</span>
<span class="t" style="left:1015.22px;top:1239.23px;font-size:36.2px;color:#222222;transform:scaleX(0.9599);">MODELO Mezcla peligrosa</span>
<span class="t" style="left:1680.16px;top:1239.23px;font-size:36.2px;color:#222222;transform:scaleX(0.9805);">Dopunite EuPCS (Glavna planirana upotreba) u odeljku &quot;Identifikacija&quot;.</span>
<span class="t" style="left:2963.21px;top:1239.23px;font-size:36.2px;color:#222222;transform:scaleX(0.9622);">MODELO Mezcla peligrosa</span>
<div style="position:absolute;left:638px;top:1823px;width:392px;height:86.5px;background:#fff;border:2.5px solid #e2e2e2;border-bottom-color:#d0d0d0;border-radius:11px;"></div>
<div style="position:absolute;left:1055px;top:1823px;width:503px;height:86.5px;background:#fff;border:2.5px solid #e2e2e2;border-bottom-color:#d0d0d0;border-radius:11px;"></div>
<div style="position:absolute;left:2457.5px;top:1822px;width:547px;height:88px;background:#fff;border:5.5px solid #2b76ac;border-radius:11px;"></div>
<div style="position:absolute;left:3029.5px;top:1823px;width:391px;height:86.5px;background:#fff;border:2.5px solid #e2e2e2;border-bottom-color:#d0d0d0;border-radius:11px;"></div>
<span class="t" style="left:818.88px;top:1853.23px;font-size:36.2px;color:#222222;transform:scaleX(0.9032);">Excel</span>
<span class="t" style="left:1176.19px;top:1853.23px;font-size:36.2px;color:#222222;transform:scaleX(0.9693);">PCN dokumentacija</span>
<span class="t" style="left:2602.68px;top:1853.23px;font-size:36.2px;color:#222222;transform:scaleX(0.9744);">Prijaviti onlajn (S</span>
<span class="t" style="left:2866.38px;top:1871.71px;font-size:20.5px;color:#222222;transform:scaleX(1.0935);">2</span>
<span class="t" style="left:2880.75px;top:1853.23px;font-size:36.2px;color:#222222;transform:scaleX(0.7667);">S)</span>
<span class="t" style="left:3200.41px;top:1853.23px;font-size:36.2px;color:#222222;transform:scaleX(0.9770);">Otkaži</span>
<svg style="position:absolute;left:0;top:0" width="3840" height="2160" viewBox="0 0 3840 2160"><path d="M644,546.4 A21.6,21.6 0 1 1 622.4,568" fill="none" stroke="#3b8ccc" stroke-width="4.6" stroke-linecap="round"/><path d="M644,555.1 A12.9,12.9 0 1 0 656.9,568" fill="none" stroke="#3b8ccc" stroke-width="4.6" stroke-linecap="round"/><circle cx="644" cy="568" r="6.9" fill="#58a36f"/><rect x="3268" y="554.5" width="26" height="26.5" rx="3.5" fill="none" stroke="#1b1b1b" stroke-width="3.2"/><path d="M3388,553.5 L3417.5,583 M3417.5,553.5 L3388,583" stroke="#1b1b1b" stroke-width="3.2" fill="none"/><g transform="translate(988,0)"><rect x="48" y="853" width="48" height="20" fill="#f5b26b"/><rect x="51" y="853" width="42" height="20" fill="#ffeb9e"/><rect x="49.5" y="846.5" width="45" height="6" fill="#f58c8c" stroke="#b8433a" stroke-width="3"/><rect x="49.5" y="873.5" width="45" height="6" fill="#f58c8c" stroke="#b8433a" stroke-width="3"/><path d="M58.4,858.5 H64.6 V865.5 Q64.6,867.6 62.5,867.6 H60.5 Q58.4,867.6 58.4,865.5 Z" fill="#f58c8c" stroke="#b8433a" stroke-width="3"/></g><rect x="653.1" y="1162.1" width="29.8" height="29.8" rx="4.5" transform="rotate(45 668 1177)" fill="#f58c8c" stroke="#c0473f" stroke-width="3"/><rect x="653.1" y="1241.1" width="29.8" height="29.8" rx="4.5" transform="rotate(45 668 1256)" fill="#f58c8c" stroke="#c0473f" stroke-width="3"/><rect x="691" y="1850.6" width="16.3" height="32.7" fill="#fff" stroke="#57a56f" stroke-width="3"/><rect x="694" y="1858" width="9.5" height="2.8" fill="#dbe7e6"/><rect x="694" y="1864" width="9.5" height="2.8" fill="#dbe7e6"/><rect x="694" y="1870" width="9.5" height="2.8" fill="#dbe7e6"/><rect x="694" y="1876" width="9.5" height="2.8" fill="#dbe7e6"/><path d="M662.6,1850.2 L689.5,1844.9 V1889 L662.6,1883.7 Z" fill="#c8d6d6" stroke="#57a56f" stroke-width="3" stroke-linejoin="miter"/><path d="M668.6,1858 H673.6 L676.3,1863.6 L679,1858 H683.8 L678.8,1866.8 L684,1875.9 H679 L676.2,1870 L673.4,1875.9 H668.4 L673.7,1866.8 Z" fill="#fff"/><line x1="1080.2" y1="1867" x2="1094.5" y2="1867" stroke="#c4c4c8" stroke-width="4" stroke-linecap="round"/><line x1="1109.4" y1="1867" x2="1124" y2="1867" stroke="#c4c4c8" stroke-width="4" stroke-linecap="round"/><line x1="1086" y1="1851" x2="1097.2" y2="1862.2" stroke="#c4c4c8" stroke-width="4" stroke-linecap="round"/><line x1="1118" y1="1851" x2="1106.8" y2="1862.2" stroke="#c4c4c8" stroke-width="4" stroke-linecap="round"/><line x1="1086" y1="1883" x2="1097.2" y2="1871.8" stroke="#c4c4c8" stroke-width="4" stroke-linecap="round"/><line x1="1118" y1="1883" x2="1106.8" y2="1871.8" stroke="#c4c4c8" stroke-width="4" stroke-linecap="round"/><line x1="1102" y1="1874.3" x2="1102" y2="1888.9" stroke="#c4c4c8" stroke-width="4" stroke-linecap="round"/><circle cx="1102" cy="1866.9" r="2.1" fill="#3d3160"/><path d="M1098.5,1846.6 A3.5,3.5 0 0 1 1105.5,1846.6 L1103.8,1859.5 A1.8,1.8 0 0 1 1100.2,1859.5 Z" fill="#3d3160"/><circle cx="2503" cy="1865.5" r="20.6" fill="#8ab8f0" stroke="#4f7cbb" stroke-width="3"/><rect x="2500.3" y="1854.5" width="4.5" height="4.5" rx="2" fill="#fff"/><path d="M2498.6,1862 H2504.8 V1873 H2507.6 V1876 H2498.6 V1873 H2501 V1865 H2498.6 Z" fill="#fff"/><path d="M3054.68698,1845.68698 L3094.31302,1884.81302 M3094.31302,1845.68698 L3054.68698,1884.81302" stroke="#b8433a" stroke-width="7.6" fill="none"/><path d="M3057.28698,1848.2869799999999 L3091.71302,1882.2130200000001 M3091.71302,1848.2869799999999 L3057.28698,1882.2130200000001" stroke="#f58c8c" stroke-width="2.4" fill="none"/></svg>
</body></html>
